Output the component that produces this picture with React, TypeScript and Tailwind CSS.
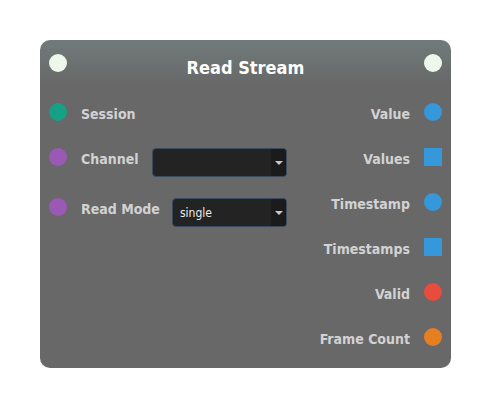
import React from 'react';

type Port = { label: string; color: string; square?: boolean };

const outputs: Port[] = [
  { label: 'Value', color: '#3498db' },
  { label: 'Values', color: '#3498db', square: true },
  { label: 'Timestamp', color: '#3498db' },
  { label: 'Timestamps', color: '#3498db', square: true },
  { label: 'Valid', color: '#e74c3c' },
  { label: 'Frame Count', color: '#e67e22' },
];

function Dot({ color, square }: { color: string; square?: boolean }) {
  return (
    <div
      className={square ? 'w-[18px] h-[18px] shrink-0' : 'w-[18px] h-[18px] rounded-full shrink-0'}
      style={{ backgroundColor: color }}
    />
  );
}

function Select({ value, className }: { value?: string; className?: string }) {
  return (
    <div className={'flex-1 h-[29px] mt-[12px] flex rounded-[4px] border border-[#3b4b5f] bg-[#232323] overflow-hidden ' + (className ?? '')}>
      <div className="flex-1 flex items-center pl-[7px] text-[12px] text-[#ececec] font-normal">{value}</div>
      <div className="w-[15px] bg-[#1b1b1b] flex items-center justify-center">
        <div className="w-0 h-0 border-l-[4px] border-r-[4px] border-t-[4px] border-l-transparent border-r-transparent border-t-[#c8c8c8]" />
      </div>
    </div>
  );
}

export default function App() {
  return (
    <div className="w-[491px] h-[408px] bg-white pt-[40px] pl-[40px] font-['DejaVu_Sans_Condensed','DejaVu_Sans',sans-serif]">
      <div className="w-[411px] h-[328px] rounded-[10px] bg-[linear-gradient(to_bottom,#717a7a_0px,#686868_45px,#686868_100%)] px-[9px]">
        {/* header */}
        <div className="h-[49px] flex justify-between pt-[14px]">
          <div className="w-[18px] h-[18px] rounded-full bg-[#eef8ea]" />
          <div className="text-white font-bold text-[18px] leading-none mt-[5px]">Read Stream</div>
          <div className="w-[18px] h-[18px] rounded-full bg-[#eef8ea]" />
        </div>

        <div className="flex justify-between">
          {/* inputs */}
          <div className="w-[238px] flex flex-col text-[14px] font-bold text-[#d2d2d2]">
            <div className="h-[45px] flex items-center gap-[14px]">
              <Dot color="#16a085" />
              <span className="mt-[6px]">Session</span>
            </div>
            <div className="h-[45px] flex items-center gap-[14px]">
              <Dot color="#9b59b6" />
              <span className="mt-[6px]">Channel</span>
              <Select className="ml-[-1px]" />
            </div>
            <div className="h-[45px] mt-[5px] flex items-center gap-[14px]">
              <Dot color="#9b59b6" />
              <span className="mt-[6px]">Read Mode</span>
              <Select value="single" className="ml-[-2px]" />
            </div>
          </div>

          {/* outputs */}
          <div className="flex flex-col items-end text-[14px] font-bold text-[#d2d2d2]">
            {outputs.map((p) => (
              <div key={p.label} className="h-[45px] flex items-center gap-[14px]">
                <span className="mt-[6px]">{p.label}</span>
                <Dot color={p.color} square={p.square} />
              </div>
            ))}
          </div>
        </div>
      </div>
    </div>
  );
}
